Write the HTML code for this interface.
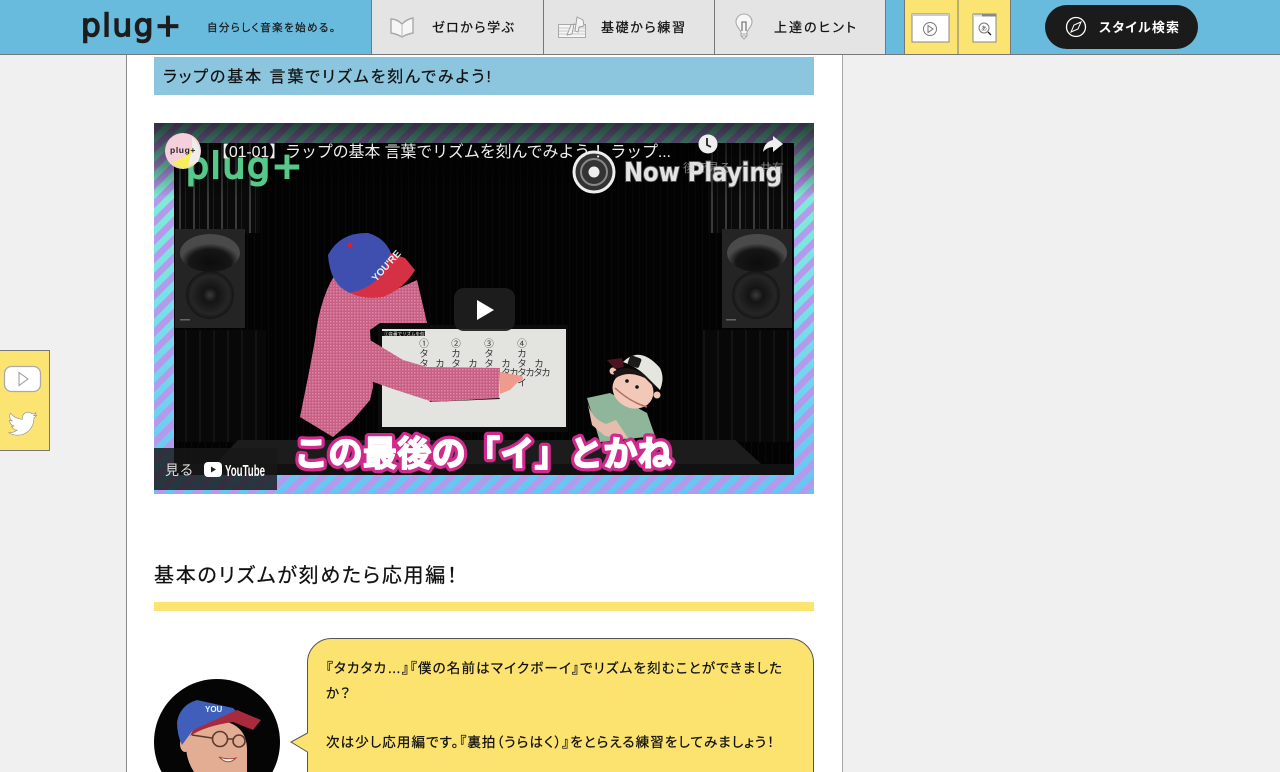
<!DOCTYPE html>
<html lang="ja"><head><meta charset="utf-8"><title>plug+</title>
<style>
html,body{margin:0;padding:0;width:1280px;height:772px;overflow:hidden;background:#f0f0f0}
body{position:relative;font-family:"Liberation Sans","Noto Sans CJK JP",sans-serif;color:#111}
.a{position:absolute;white-space:nowrap}
svg{position:absolute;overflow:hidden;font-family:"Liberation Sans","Noto Sans CJK JP",sans-serif}
.p{font-feature-settings:"palt";stroke:#111;stroke-width:.25px}
</style></head><body>
<!-- content column -->
<div class="a" style="left:126px;top:54px;width:715px;height:718px;background:#fff;border-left:1px solid #8a8a8a;border-right:1px solid #a8a8a8"></div>
<!-- header -->
<div class="a" style="left:0;top:0;width:1280px;height:54px;background:#69bbdd;border-bottom:1px solid #777"></div>
<div class="a" style="left:372px;top:0;width:513px;height:54px;background:#e4e4e4"></div>
<svg style="left:0;top:0" width="1280" height="55" viewBox="0 0 1280 55">
 <text x="81" y="36" font-size="31" fill="#1d1d1d" stroke="#1d1d1d" stroke-width="1.500" font-family="'DejaVu Sans',sans-serif" textLength="100">plug+</text>
 <text class="p" x="207" y="31" font-size="10.500" fill="#222" textLength="128">自分らしく音楽を始める。</text>
 <path d="M371.500 0v54M543.500 0v54M714.500 0v54M885.500 0v54" stroke="#777" fill="none"/>
 <text class="p" x="432" y="32" font-size="13" fill="#111" textLength="82">ゼロから学ぶ</text>
 <text class="p" x="601" y="32" font-size="13" fill="#111" textLength="84">基礎から練習</text>
 <text class="p" x="774" y="32" font-size="13" fill="#111" textLength="82">上達のヒント</text>
 <!-- book -->
 <path d="M391 19q6 0 11 5q5-5 11-6v15q-6 1-11 4q-5-3-11-4z" fill="#f6f6f6" stroke="#a8a8a8" stroke-width="1.400"/>
 <path d="M402 24v13" stroke="#bbb" fill="none"/>
 <!-- music sheet -->
 <rect x="558.500" y="24.500" width="27" height="13" fill="#f6f6f6" stroke="#aaa"/>
 <path d="M558 28h27M558 31h27M558 34h27" stroke="#999" stroke-width=".6" fill="none"/>
 <path d="M567 35l4-10 3-1-2 10zM575 31l2-14 6 3 1 6-5 1-1 5z" fill="#f4f4f4" stroke="#999" stroke-width=".9"/>
 <!-- bulb -->
 <path d="M744 14c-5 0-8 4-8 8 0 4 3 6 5 10v4l3 3 3-3v-4c2-4 5-6 5-10 0-4-3-8-8-8z" fill="#f6f6f6" stroke="#aaa" stroke-width="1.100"/>
 <path d="M742 31v-9h4v9" fill="none" stroke="#666" stroke-width="1.100"/><path d="M741 34h6M741 36h6" stroke="#aaa" fill="none"/>
 <!-- yellow -->
 <rect x="904" y="0" width="107" height="54" fill="#fce473"/>
 <path d="M904.500 0v54M958 0v54M1010.500 0v54" stroke="#777" fill="none"/>
 <g stroke="#888" fill="#fff"><rect x="912" y="14" width="37" height="28"/><rect x="973" y="14" width="23" height="28"/></g>
 <path d="M912 15h37" stroke="#ccc" stroke-width="2"/><path d="M973 15.500h9" stroke="#ddd" stroke-width="2"/><path d="M982 15.500h14" stroke="#888" stroke-width="2"/>
 <g fill="none" stroke="#777"><circle cx="930" cy="29" r="6.500"/><path d="M928 25.500l5 3.500-5 3.500z"/><circle cx="984" cy="28" r="5"/></g>
 <text x="984" y="30.500" font-size="6" text-anchor="middle" fill="#555">あ</text>
 <path d="M988 32l3 3" stroke="#222" stroke-width="1.300"/>
 <!-- pill -->
 <rect x="1045" y="5" width="153" height="44" rx="22" fill="#1b1b1b"/>
 <circle cx="1076" cy="27" r="9.500" fill="none" stroke="#fff" stroke-width="1.300"/>
 <path d="M1081 22l-7 3-3 7 7-3z" fill="none" stroke="#fff"/>
 <text x="1099" y="32" font-size="13" font-weight="700" fill="#fff" textLength="80" style="font-feature-settings:'palt'">スタイル検索</text>
</svg>
<!-- title bar -->
<div class="a" style="left:154px;top:57px;width:660px;height:38px;background:#8cc6de"></div>
<svg style="left:154px;top:57px" width="660" height="38" viewBox="154 57 660 38"><text class="p" x="163" y="82" font-size="16" fill="#111" textLength="328">ラップの基本 言葉でリズムを刻んでみよう!</text></svg>
<!-- video -->
<svg style="left:154px;top:123px" width="660" height="371" viewBox="154 123 660 371">
 <defs>
  <linearGradient id="g" x1="0" y1="0" x2="0" y2="1"><stop offset="0" stop-color="#86f0cc"/><stop offset=".5" stop-color="#78e0e8"/><stop offset="1" stop-color="#68c4f4"/></linearGradient>
  <pattern id="s" width="13" height="13" patternUnits="userSpaceOnUse" patternTransform="rotate(45 154 123)"><rect width="6.500" height="13" fill="#b49aec"/></pattern>
  <pattern id="b" width="14" height="10" patternUnits="userSpaceOnUse" x="176"><rect width="14" height="10" fill="#0a0a0a"/><rect x="3" width="2" height="10" fill="#3a3a3a"/><rect x="9" width="1" height="10" fill="#1e1e1e"/></pattern>
  <pattern id="b2" width="14" height="10" patternUnits="userSpaceOnUse"><rect width="14" height="10" fill="#080808"/><rect x="3" width="2" height="10" fill="#131313"/></pattern>
  <pattern id="c" width="7" height="10" patternUnits="userSpaceOnUse"><rect width="7" height="10" fill="#030303"/><rect x="2" width="1" height="10" fill="#090909"/></pattern>
  <pattern id="sh" width="3" height="3" patternUnits="userSpaceOnUse"><rect width="3" height="3" fill="#c85f84"/><rect width="1.500" height="1.500" fill="#dc88a4"/></pattern>
  <linearGradient id="top" x1="0" y1="0" x2="0" y2="1"><stop offset="0" stop-color="#000" stop-opacity=".72"/><stop offset=".55" stop-color="#000" stop-opacity=".4"/><stop offset="1" stop-color="#000" stop-opacity="0"/></linearGradient>
  <radialGradient id="w"><stop offset="0" stop-color="#3a3a3a"/><stop offset=".3" stop-color="#141414"/><stop offset=".8" stop-color="#262626"/><stop offset="1" stop-color="#151515"/></radialGradient>
  <radialGradient id="h" cy=".75"><stop offset="0" stop-color="#0c0c0c"/><stop offset=".7" stop-color="#161616"/><stop offset="1" stop-color="#4a4a4a"/></radialGradient>
 </defs>
 <rect x="154" y="123" width="660" height="371" fill="url(#g)"/><rect x="154" y="123" width="660" height="371" fill="url(#s)"/>
 <rect x="174" y="143" width="620" height="332" fill="url(#c)"/>
 <rect x="176" y="143" width="84" height="90" fill="url(#b)"/><rect x="176" y="330" width="90" height="112" fill="url(#b2)"/>
 <rect x="708" y="143" width="84" height="90" fill="url(#b)"/><rect x="702" y="330" width="90" height="112" fill="url(#b2)"/>
 <path d="M238 440H735L773 475H205z" fill="#1c1c1c"/><rect x="174" y="464" width="620" height="11" fill="#111"/>
 <!-- speakers -->
 <g><rect x="175" y="229" width="70" height="99" fill="#242424"/><ellipse cx="210" cy="253" rx="30" ry="19" fill="url(#h)"/><circle cx="210" cy="295" r="24" fill="url(#w)"/><rect x="180" y="319" width="10" height="1.500" fill="#666"/>
 <rect x="722" y="229" width="70" height="99" fill="#242424"/><ellipse cx="757" cy="253" rx="30" ry="19" fill="url(#h)"/><circle cx="756" cy="295" r="24" fill="url(#w)"/><rect x="726" y="319" width="10" height="1.500" fill="#666"/></g>
 <!-- board -->
 <rect x="378" y="325" width="190" height="107" fill="#0c0c0c"/><rect x="382" y="329" width="184" height="98" fill="#e3e3df"/>
 <rect x="382" y="331" width="43" height="5" fill="#111"/>
 <text x="384" y="335.500" font-size="4.500" fill="#eee">①音番でリズムを刻む</text>
 <g font-size="9.500" fill="#333" text-anchor="middle">
  <text x="424" y="347">①</text><text x="456" y="347">②</text><text x="489" y="347">③</text><text x="522" y="347">④</text>
  <text x="424" y="357">タ</text><text x="456" y="357">カ</text><text x="489" y="357">タ</text><text x="522" y="357">カ</text>
  <text x="424" y="367">タ</text><text x="440" y="367">カ</text><text x="456" y="367">タ</text><text x="473" y="367">カ</text><text x="489" y="367">タ</text><text x="506" y="367">カ</text><text x="522" y="367">タ</text><text x="539" y="367">カ</text>
  <text x="506" y="376">タ</text><text x="514" y="376">カ</text><text x="522" y="376">タ</text><text x="530" y="376">カ</text><text x="538" y="376">タ</text><text x="546" y="376">カ</text>
  <text x="512" y="386">ー</text><text x="522" y="386">イ</text>
 </g>
 <!-- man -->
 <path d="M338 270Q320 295 315 340L310 367L300 417L333 437L353 420L370 400L373 387L370 330L380 323L427 323L417 280L395 290Z" fill="url(#sh)"/>
 <path d="M498 396L500 399L430 402L428 398Z" fill="#111"/>
 <path d="M327 330L340 327L370 340L403 360L427 367L500 368L499 398L433 402L390 388L368 380Q332 365 327 330Z" fill="url(#sh)"/>
 <path d="M500 372L522 376Q525 380 518 382L510 390L500 394Z" fill="#ee9a8c"/>
 <path d="M328 255Q340 232 368 233Q385 238 391 253Q388 285 350 293Q330 285 328 255Z" fill="#3e4fb0"/>
 <path d="M390 253L405 258L415 270Q405 288 383 297Q365 300 350 293Q385 285 390 253Z" fill="#d63045"/>
 <text x="364" y="275" font-size="10" font-weight="700" fill="#eee" transform="rotate(-48 378 265)">YOU'RE</text>
 <circle cx="350" cy="245" r="2.500" fill="#d22"/>
 <!-- puppet -->
 <path d="M587 398L610 393L647 413L655 436L600 442Z" fill="#8fb69b"/>
 <path d="M587 400Q590 418 606 424L616 420L628 438L605 436L592 425Z" fill="#e6bcac"/>
 <circle cx="613" cy="371" r="3.500" fill="#eec4b2"/><circle cx="657" cy="395" r="3.500" fill="#eec4b2"/>
 <ellipse cx="633" cy="390" rx="21" ry="18" fill="#f2c8b8" transform="rotate(25 633 390)"/>
 <path d="M613 372Q628 362 650 378L658 391L645 378Q628 370 616 378Z" fill="#1d1414"/>
 <path d="M623 362Q640 345 660 368Q665 378 660 390L645 375Q635 366 623 362Z" fill="#e6e6e0"/>
 <path d="M607 360L622 358L624 367L615 369Z" fill="#4b1420"/>
 <rect x="629" y="356" width="12" height="10" rx="2" fill="#1b1b1b" transform="rotate(20 633 360)"/>
 <circle cx="637" cy="387" r="1.800" fill="#111"/><circle cx="627" cy="381" r="1.800" fill="#111"/>
 <path d="M615 388Q630 402 647 407" stroke="#b0705f" fill="none" stroke-width="1.500"/>
 <!-- top fade -->
 <rect x="154" y="123" width="660" height="75" fill="url(#top)"/>
 <!-- overlay logos -->
 <text x="186" y="178" font-size="36" fill="#56c88a" stroke="#56c88a" stroke-width="2" font-family="'DejaVu Sans',sans-serif" textLength="116">plug+</text>
 <circle cx="594" cy="172" r="20" fill="#333" stroke="#eee" stroke-width="3"/><circle cx="594" cy="172" r="13" fill="none" stroke="#888" stroke-width="2"/><circle cx="594" cy="172" r="5.500" fill="#eee"/>
 <text x="624" y="181" font-size="26" font-weight="700" fill="#e4e4e4" stroke="#555" stroke-width="2" paint-order="stroke" font-family="'DejaVu Sans',sans-serif" textLength="158" lengthAdjust="spacingAndGlyphs">Now Playing</text>
 <circle cx="183" cy="151" r="18" fill="#f6cfdc"/><path d="M195 138Q202 150 195 164L183 169 172 163 188 155Z" fill="#f6ef5a"/><path d="M192 137Q204 148 198 162L188 166 192 150Z" fill="#ededed"/>
 <text x="183" y="153" text-anchor="middle" font-size="8.500" font-weight="700" fill="#222" letter-spacing=".6">plug+</text>
 <text x="213" y="157" font-size="16" fill="#eee" textLength="458">【01-01】ラップの基本 言葉でリズムを刻んでみよう！ ラップ...</text>
 <circle cx="708" cy="144" r="9.500" fill="#eee"/><path d="M707 138v7l4 2" fill="none" stroke="#222" stroke-width="1.800"/>
 <text x="707" y="172" text-anchor="middle" font-size="12" fill="#ccc" fill-opacity=".6">後で見る</text>
 <path d="M773 136l10 8-10 8v-5q-6 0-10 5 1-10 10-12z" fill="#eee"/>
 <text x="772" y="172" text-anchor="middle" font-size="12" fill="#ccc" fill-opacity=".6">共有</text>
 <!-- play -->
 <rect x="454" y="288" width="61" height="43" rx="10" fill="#1e1e1e" fill-opacity=".92"/><path d="M477 300l17 10-17 10z" fill="#fff"/>
 <!-- caption -->
 <text x="294" y="466" font-size="35" font-weight="700" fill="#fff" stroke="#cf2a8c" stroke-width="8" paint-order="stroke" stroke-linejoin="round" textLength="378" lengthAdjust="spacingAndGlyphs">この最後の「イ」とかね</text>
 <text x="294" y="466" font-size="35" font-weight="700" fill="#fff" stroke="#fff" stroke-width="1.500" stroke-linejoin="round" textLength="378" lengthAdjust="spacingAndGlyphs">この最後の「イ」とかね</text>
 <!-- watch on -->
 <rect x="154" y="448" width="123" height="42" fill="#171717" fill-opacity=".82"/>
 <text x="165" y="475" font-size="14" fill="#ddd" letter-spacing=".5">見る</text>
 <rect x="204" y="462" width="18" height="15" rx="4" fill="#fff"/><path d="M211 466.500l5 3-5 3z" fill="#222"/>
 <text x="225" y="476" font-size="16" font-weight="700" fill="#fff" textLength="40" lengthAdjust="spacingAndGlyphs">YouTube</text>
</svg>
<!-- heading + bar -->
<svg style="left:154px;top:555px" width="660" height="40" viewBox="154 555 660 40"><text class="p" x="154" y="582" font-size="20" fill="#111" textLength="303">基本のリズムが刻めたら応用編！</text></svg>
<div class="a" style="left:154px;top:602px;width:660px;height:9px;background:#fce473"></div>
<!-- avatar + bubble -->
<svg style="left:140px;top:630px" width="700" height="142" viewBox="140 630 700 142">
 <path d="M161.600 772A63 63 0 1 1 272.400 772Z" fill="#050505"/>
 <path d="M186 745Q186 725 215 720Q247 722 247 750V772H194Q186 760 186 745Z" fill="#e3ad93"/>
 <ellipse cx="185" cy="744" rx="5" ry="8" fill="#e3ad93"/>
 <path d="M177 722Q180 705 197 700L233 708L237 712L193 730L182 745Q177 735 177 722Z" fill="#3f5fbb"/>
 <path d="M193 730L237 710L261 720L253 730L233 722Q205 726 190 736Z" fill="#a82a3c"/>
 <text x="205" y="712" font-size="8" font-weight="700" fill="#dfe">YOU</text>
 <g fill="none" stroke="#5a3a30" stroke-width="1.600"><circle cx="220" cy="739" r="7.500"/><circle cx="239" cy="741" r="6"/><path d="M227.500 739h6M212 738l-20-3"/></g>
 <path d="M219 757q9 3 17 1q-8 8-17-1z" fill="#fff" stroke="#9a4f40" stroke-width="1"/>
 <path d="M307.500 772V662.500a24 24 0 0 1 24-24H789.500a24 24 0 0 1 24 24V772" fill="#fce370" stroke="#555"/>
 <path d="M308 733L291 742L308 752Z" fill="#fce370"/><path d="M307.500 733L291 742L307.500 752" fill="none" stroke="#555"/>
 <g font-size="13.500" fill="#111">
  <text class="p" x="326" y="673" textLength="456">『タカタカ…』『僕の名前はマイクボーイ』でリズムを刻むことができました</text>
  <text class="p" x="326" y="698" textLength="24">か？</text>
  <text class="p" x="326" y="747" textLength="448">次は少し応用編です。『裏拍（うらはく）』をとらえる練習をしてみましょう！</text>
 </g>
</svg>
<!-- side widget -->
<div class="a" style="left:-1px;top:350px;width:49px;height:99px;background:#fce473;border:1px solid #777"></div>
<svg style="left:0;top:351px" width="50" height="100" viewBox="0 351 50 100">
 <rect x="4.500" y="366.500" width="36" height="25" rx="7" fill="#fff" stroke="#aaa" stroke-width="1.300"/>
 <path d="M19 372.500l9 6.500-9 6.500z" fill="#fff" stroke="#999"/>
 <path transform="translate(8.500,409.500) scale(1.180)" fill="#fff" stroke="#888" stroke-width=".5" d="M23.953 4.570a10 10 0 01-2.825.775 4.958 4.958 0 002.163-2.723c-.951.555-2.005.959-3.127 1.184a4.920 4.920 0 00-8.384 4.482C7.690 8.095 4.067 6.130 1.640 3.162a4.822 4.822 0 00-.666 2.475c0 1.710.870 3.213 2.188 4.096a4.904 4.904 0 01-2.228-.616v.060a4.923 4.923 0 003.946 4.827 4.996 4.996 0 01-2.212.085 4.936 4.936 0 004.604 3.417 9.867 9.867 0 01-6.102 2.105c-.390 0-.779-.023-1.170-.067a13.995 13.995 0 007.557 2.209c9.053 0 13.998-7.496 13.998-13.985 0-.210 0-.420-.015-.630A9.935 9.935 0 0024 4.590z"/>
</svg>
</body></html>
